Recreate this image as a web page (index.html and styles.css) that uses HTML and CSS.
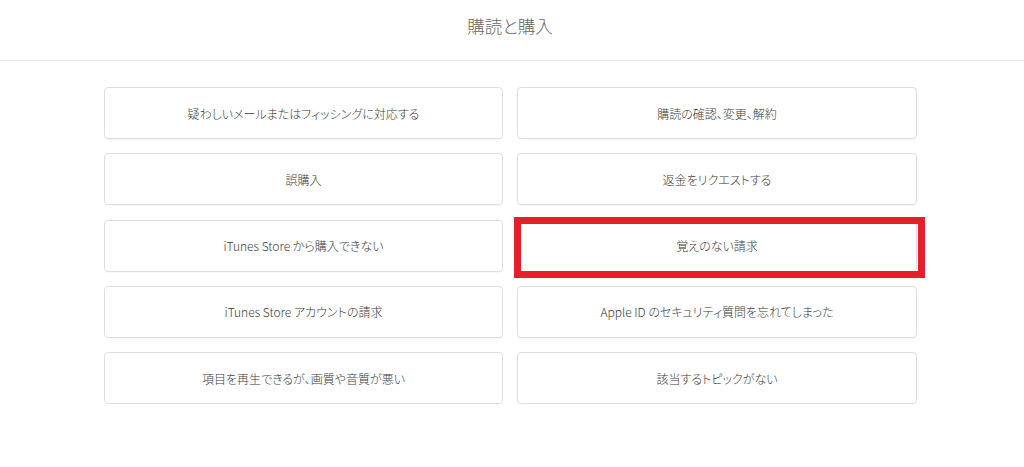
FILE: index.html
```html
<!DOCTYPE html>
<html lang="ja">
<head>
<meta charset="utf-8">
<link rel="stylesheet" href="styles.css">
</head>
<body>
<header class="header"><h1 class="title">購読と購入</h1></header>
<main class="grid">
  <a class="card">疑わしいメールまたはフィッシングに対応する</a>
  <a class="card">購読の確認、変更、解約</a>
  <a class="card">誤購入</a>
  <a class="card">返金をリクエストする</a>
  <a class="card">iTunes Store から購入できない</a>
  <a class="card card-marked">覚えのない請求<span class="mark"></span></a>
  <a class="card">iTunes Store アカウントの請求</a>
  <a class="card">Apple ID のセキュリティ質問を忘れてしまった</a>
  <a class="card">項目を再生できるが、画質や音質が悪い</a>
  <a class="card">該当するトピックがない</a>
</main>
</body>
</html>
```
FILE: styles.css
```css
html, body {
  margin: 0;
  padding: 0;
  background: #ffffff;
  font-family: "Noto Sans CJK JP", "Noto Sans", sans-serif;
}
.header {
  height: 61px;
  box-sizing: border-box;
  border-bottom: 1px solid #e8e8e8;
  padding-top: 15px;
  text-align: center;
}
.title {
  margin: 0 0 0 -4px;
  font-size: 17.5px;
  line-height: 22px;
  font-weight: 300;
  color: #666666;
  font-feature-settings: "palt";
}
.grid {
  display: grid;
  grid-template-columns: 399px 400px;
  column-gap: 14px;
  row-gap: 14.25px;
  grid-auto-rows: 52px;
  margin: 26px 0 0 104px;
  width: 813px;
}
.card {
  position: relative;
  display: flex;
  align-items: center;
  justify-content: center;
  border: 1px solid #dedede;
  border-radius: 4px;
  box-shadow: 0 1px 1px rgba(0,0,0,0.03);
  color: #3a3a3a;
  font-size: 12px;
  font-weight: 300;
  font-feature-settings: "palt";
  text-decoration: none;
}
.mark {
  position: absolute;
  top: -4px;
  left: -4px;
  right: -9px;
  bottom: -7px;
  border: 7px solid #e61f2a;
}
```
